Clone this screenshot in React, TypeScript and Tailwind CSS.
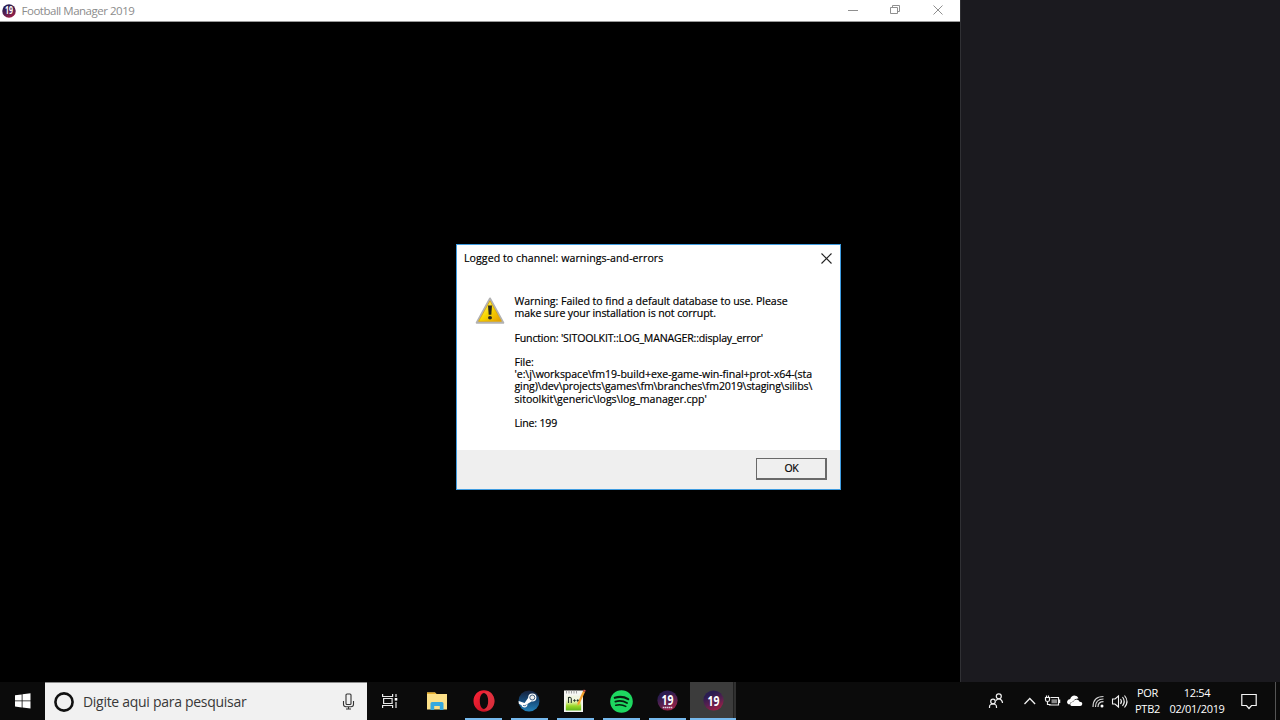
import type { ReactNode } from "react";

function Badge19({ id, size, caption }: { id: string; size: number; caption?: boolean }) {
  return (
    <svg width={size} height={size} viewBox="0 0 22 22">
      <defs>
        <linearGradient id={id} x1="0.25" y1="0" x2="0.7" y2="1">
          <stop offset="0.2" stopColor="#2b1c50" />
          <stop offset="0.6" stopColor="#5b2150" />
          <stop offset="1" stopColor="#a51e45" />
        </linearGradient>
      </defs>
      <circle cx="11" cy="11" r="10.6" fill={`url(#${id})`} />
      <text
        x="11"
        y={caption ? 16 : 16.4}
        textAnchor="middle"
        textLength="12.5"
        lengthAdjust="spacingAndGlyphs"
        fontFamily="'Open Sans', sans-serif"
        fontWeight="700"
        fontSize="15.5"
        fill="#fff"
      >
        19
      </text>
      {caption && <path d="M6 18.3h10" stroke="#d9cfe0" strokeWidth="1.5" strokeDasharray="1.6 .5" />}
    </svg>
  );
}

function TitleBar() {
  return (
    <header className="flex h-[22px] items-center border-b border-[#9a9a9a] bg-white pl-[2px]">
      <Badge19 id="title" size={14} />
      <span className="mt-[1px] ml-[5.5px] text-[11.5px] leading-none tracking-[-0.48px] text-[#8c8c8c]">Football Manager 2019</span>
      <svg className="ml-auto" width="130" height="21" viewBox="830 0 130 21" fill="none" stroke="#8f8f8f">
        <path d="M848 10.5h10" />
        <path d="M890.5 7.5h7v6h-7zM892.5 7.5v-2h7v6h-2" />
        <path d="M933.5 5.5l9 9M942.5 5.5l-9 9" />
      </svg>
    </header>
  );
}

function WarningIcon() {
  return (
    <svg className="mt-[1.5px]" width="30" height="28" viewBox="0 0 30 28">
      <defs>
        <linearGradient id="warn" x1="0" y1="0" x2="1" y2="1">
          <stop offset="0.2" stopColor="#fff06a" />
          <stop offset="0.5" stopColor="#f8d800" />
          <stop offset="1" stopColor="#e39a00" />
        </linearGradient>
      </defs>
      <path d="M15 1.5L28.3 25.8H1.7z" fill="#c4c4c4" stroke="#b2b2b2" strokeWidth="2" strokeLinejoin="round" />
      <path d="M15 3.8L26.4 24.3H3.6z" fill="url(#warn)" stroke="#dda500" strokeWidth=".8" strokeLinejoin="round" />
      <path d="M13 8.5h4l-.7 9.300h-2.600z" fill="#29281f" />
      <ellipse cx="15" cy="20.8" rx="2" ry="1.8" fill="#29281f" />
    </svg>
  );
}

function ErrorDialog() {
  return (
    <section className="absolute top-[244px] left-[456px] flex h-[246px] w-[385px] flex-col border border-[#3f9ce0] bg-white text-[10.6px] text-black [-webkit-text-stroke:0.18px]">
      <div className="flex h-[27px] items-center justify-between pr-[8px] pl-[7px]">
        <span className="mt-[1px] tracking-[0.06px]">Logged to channel: warnings-and-errors</span>
        <svg width="11" height="11" viewBox="0 0 11 11" stroke="#222" strokeWidth="1.1">
          <path d="M.5.5l10 10M10.5.5l-10 10" />
        </svg>
      </div>
      <div className="flex flex-1 pt-[23px] pl-[18px]">
        <WarningIcon />
        <div className="ml-[9.5px] leading-[12.2px] whitespace-nowrap">
          <p className="tracking-[-0.05px]">Warning: Failed to find a default database to use. Please</p>
          <p className="tracking-[-0.12px]">make sure your installation is not corrupt.</p>
          <p className="mt-[12.2px] tracking-[-0.19px]">Function: 'SITOOLKIT::LOG_MANAGER::display_error'</p>
          <p className="mt-[12.2px] tracking-[-0.05px]">File:</p>
          <p className="tracking-[-0.06px]">'e:\j\workspace\fm19-build+exe-game-win-final+prot-x64-(sta</p>
          <p className="tracking-[-0.13px]">ging)\dev\projects\games\fm\branches\fm2019\staging\silibs\</p>
          <p className="tracking-[-0.03px]">sitoolkit\generic\logs\log_manager.cpp'</p>
          <p className="mt-[12.2px] tracking-[-0.2px]">Line: 199</p>
        </div>
      </div>
      <footer className="flex h-[39px] items-start justify-end bg-[#efefef] pt-[8px] pr-[13px]">
        <button className="flex h-[22px] w-[71px] items-center justify-center border border-r-2 border-b-2 border-[#696969] bg-[#efefef] pt-px pl-px text-[10.5px] tracking-[-0.2px]">
          OK
        </button>
      </footer>
    </section>
  );
}

function TaskButton({ children, running, active }: { children: ReactNode; running?: boolean; active?: boolean }) {
  return (
    <div className={active ? "flex h-full w-[46px] flex-col bg-[#3c3c3c]" : "flex h-full w-[46px] flex-col"}>
      <div className="flex flex-1 items-center justify-center">{children}</div>
      <div className={active ? "h-[2px] bg-[#76b9ed]" : running ? "mx-[4.5px] h-[2px] bg-[#76b9ed]" : "h-[2px]"} />
    </div>
  );
}

function Taskbar() {
  return (
    <footer className="flex h-[38px] items-stretch bg-[#0b0b0b] text-white">
      <div className="flex w-[45px] items-center justify-center">
        <svg width="16" height="16" viewBox="0 0 16 16" fill="#fff">
          <path d="M0 2.3l6.7-.9v6.1H0zM7.5 1.3L15.5.2v7.3h-8zM0 8.3h6.7v6.1L0 13.5zM7.5 8.3h8v7.3l-8-1.1z" />
        </svg>
      </div>
      <div className="flex w-[322px] items-center border-t border-[#8a8a8a] bg-[#f1f1f1] pr-[12px] pl-[8px]">
        <svg width="22" height="22" viewBox="0 0 22 22">
          <circle cx="11" cy="11" r="8.6" fill="none" stroke="#111" strokeWidth="2.6" />
        </svg>
        <span className="ml-[8px] text-[14px] tracking-[-0.29px] text-[#383838]">Digite aqui para pesquisar</span>
        <svg className="ml-auto" width="13" height="17" viewBox="0 0 13 17" fill="none" stroke="#333" strokeWidth="1.1">
          <rect x="4" y="1" width="5" height="10.5" rx="1" />
          <path d="M1.5 8v3.2q0 2.5 2.5 2.5h5q2.500 0 2.500-2.500V8M6.500 13.700v2.300M4 16h5" />
        </svg>
      </div>
      <div className="flex w-[47px] items-center justify-center pr-[2px]">
        <svg width="16" height="16" viewBox="0 0 16 16" fill="none" stroke="#e8e8e8" strokeWidth="1.2">
          <path d="M.6 1v2.500h10V1M.6 15v-2.500h10V15M1.600 5.500h8.500v5H1.600zM14 1v3M14 9v6" />
          <path d="M12.700 5h2.600v2.600h-2.600z" fill="#fff" stroke="none" />
        </svg>
      </div>
      <TaskButton>
        <svg className="mt-[1px]" width="22" height="20" viewBox="0 0 22 20">
          <path d="M1 1.500h8l1.500 1.500H21v15.500H1z" fill="#fce088" />
          <path d="M1 1.500h8l1.500 1.500H1z" fill="#e9b02f" />
          <path d="M4.500 19v-6.500q0-1.500 1.500-1.500h10q1.500 0 1.500 1.500V19h-3.700v-4H8.200v4z" fill="#35a9df" />
        </svg>
      </TaskButton>
      <TaskButton running>
        <svg className="mt-[2px] ml-px" width="22" height="22" viewBox="0 0 22 22">
          <defs>
            <linearGradient id="opera" x1="0" y1="0" x2="1" y2="1">
              <stop offset="0" stopColor="#ff2638" />
              <stop offset="1" stopColor="#b80d20" />
            </linearGradient>
          </defs>
          <path d="M11 .3C5 .3.500 5 .500 11S5 21.700 11 21.700 21.500 17 21.500 11 17 .3 11 .3zM11 3c2.700 0 4.200 3.700 4.200 8S13.700 19 11 19s-4.200-3.700-4.200-8S8.300 3 11 3z" fill="url(#opera)" fillRule="evenodd" />
          <path d="M11 3c2-2.300 5-1.500 7.200.2C20.300 5.200 21.500 8 21.500 11s-1.200 5.800-3.300 7.800C16 20.500 13 21.300 11 19c2.700 0 4.200-3.700 4.200-8S13.700 3 11 3z" fill="#e8464e" opacity=".55" />
        </svg>
      </TaskButton>
      <TaskButton running>
        <svg className="mt-[2px]" width="22" height="22" viewBox="0 0 22 22">
          <defs>
            <linearGradient id="steam" x1="0" y1="0" x2="0" y2="1">
              <stop offset="0" stopColor="#15213c" />
              <stop offset=".5" stopColor="#164b7b" />
              <stop offset="1" stopColor="#2382ba" />
            </linearGradient>
          </defs>
          <circle cx="11" cy="11" r="10.500" fill="url(#steam)" />
          <path d="M.600 11l6 2 3.800-5.500 3.100 4-4.100 2.500c.3 2-1 3.600-2.900 3.600-1.500 0-2.600-1-3-2.300L.8 13.800z" fill="#fff" />
          <circle cx="14.300" cy="7.500" r="4.100" fill="#fff" />
          <circle cx="14.300" cy="7.500" r="2.500" fill="#eee" stroke="#284b70" strokeWidth=".9" />
          <path d="M5 15.400q3 1.500 3.300-1" fill="none" stroke="#285d8c" strokeWidth=".8" />
        </svg>
      </TaskButton>
      <TaskButton running>
        <svg className="mt-[2px]" width="22" height="24" viewBox="0 0 22 24">
          <defs>
            <linearGradient id="npp" x1="0" y1="0" x2="0" y2="1">
              <stop offset=".25" stopColor="#f1f5e0" />
              <stop offset=".5" stopColor="#d5eb8e" />
              <stop offset=".7" stopColor="#9bd827" />
              <stop offset="1" stopColor="#5fb51b" />
            </linearGradient>
          </defs>
          <path d="M0 1.500h19v21.500H0z" fill="#f6f6f3" />
          <path d="M1.800 6.500h15.400v15H1.800z" fill="url(#npp)" />
          <path d="M2.500 1.500v3M5 1.500v3M7.500 1.500v3M10 1.500v3M12.500 1.500v3" stroke="#969696" strokeWidth=".9" />
          <path d="M4.500 14V8.500q2.800-.5 2.800 1.500V14M9.300 11.500h2.400M10.500 10.200v2.600M12.600 11.500h2.400M13.800 10.200v2.600" fill="none" stroke="#28372b" strokeWidth="1.100" />
          <path d="M13.500 14L19 2l2 1-5.500 12-2 1.500z" fill="#f4a02b" />
          <path d="M19 2l.8-1.500 2 1-.8 1.500z" fill="#d95a51" />
        </svg>
      </TaskButton>
      <TaskButton running>
        <svg className="mt-[2px]" width="23" height="23" viewBox="0 0 24 24">
          <circle cx="12" cy="12" r="11.800" fill="#1ed760" />
          <g fill="none" stroke="#071b0e" strokeLinecap="round">
            <path d="M5 8.100c4.500-1.300 10-.9 14 1.400" strokeWidth="2.300" />
            <path d="M5.600 12.100c4.200-1.200 8.500-.7 12.200 1.500" strokeWidth="1.900" />
            <path d="M6 15.900c3.700-.9 7.200-.6 10.500 1.300" strokeWidth="1.500" />
          </g>
        </svg>
      </TaskButton>
      <TaskButton running>
        <Badge19 id="first" size={21} caption />
      </TaskButton>
      <div className="relative">
        <TaskButton active>
          <Badge19 id="second" size={21} />
        </TaskButton>
        <div className="absolute top-0 right-0 h-[36px] w-[3px] border-l border-[#202020] bg-[#303030]" />
      </div>
      <div className="ml-auto flex items-stretch">
        <svg width="150" height="38" viewBox="982 682 150 38" fill="none" stroke="#f2f2f2" strokeWidth="1.200">
          <circle cx="993" cy="701.500" r="2.300" />
          <path d="M989.500 708v-1q0-3 3.500-3t3.500 3v1" />
          <circle cx="998.800" cy="696.300" r="2.500" />
          <path d="M996 700.500q2.800-2.800 5.200-.5 1.300 1.200 1.300 3" />
          <path d="M1024.500 704l5.300-5.500 5.300 5.500" strokeWidth="1.300" />
          <path d="M1050.500 697.500h8v7.500h-9.500" />
          <path d="M1059.500 699.500v3.500" strokeWidth="1.500" />
          <path d="M1051.500 699.300h5.500v4h-5.500z" fill="#8a8a8a" stroke="none" />
          <path d="M1045.500 697.500h4v2.500q0 1.500-2 1.500t-2-1.500zM1046.500 695.500v2M1048.500 695.500v2M1047.500 701.500v3h3" />
          <path d="M1069.500 704.500q-2.700-.5-2.400-3 .5-2.500 3.100-2.500 1-3.500 4.300-3.500 3 0 4 2.700l-3.500 1-2 2.200q-3 .6-3.500 3.100z" fill="#fff" stroke="none" />
          <path d="M1071.500 706q-1.500-.5-1.300-2.300.5-1.900 2.800-1.700 1-2.700 3.600-2.600 2.400.2 3 2.400 2.700 0 2.700 2.200-.2 2-2.200 2z" fill="#fff" stroke="none" />
          <g stroke="#d5d5d5" strokeWidth="1.200">
            <path d="M1093 707q0-10.500 10.500-10.500M1095.500 707q0-8 8-8M1098 707q0-5.300 5.500-5.300" />
          </g>
          <circle cx="1102" cy="706" r="1.500" fill="#fff" stroke="none" />
          <path d="M1112.500 699h2.500l3.500-3v11l-3.500-3h-2.500zM1120.500 699q2 2.500 0 5M1122.500 697q3.500 4.500 0 9M1124.500 695.500q5 6 0 12" strokeWidth="1.100" />
        </svg>
        <div className="flex w-[32px] flex-col items-center pt-[3px] pr-px text-[11px] leading-[16px] tracking-[-0.25px]">
          <span>POR</span>
          <span>PTB2</span>
        </div>
        <div className="flex w-[67px] flex-col items-center pt-[3px] pr-px text-[11px] leading-[16px] tracking-[-0.32px]">
          <span>12:54</span>
          <span>02/01/2019</span>
        </div>
        <div className="flex w-[45px] items-center justify-start border-r border-[#555] pl-[10px]">
          <svg width="16" height="17" viewBox="0 0 16 17" fill="none" stroke="#f5f5f5" strokeWidth="1.200">
            <path d="M.8 1.500h14.400v11H10.500L8 15.500 5.500 12.500H.8z" />
          </svg>
        </div>
        <div className="w-[4px]" />
      </div>
    </footer>
  );
}

export default function App() {
  return (
    <main className="relative flex h-[720px] w-[1280px] flex-col overflow-hidden bg-black font-['Open_Sans','Noto_Sans',sans-serif]">
      <div className="flex h-[682px]">
        <div className="w-[961px] border-r border-[#303034] bg-black">
          <TitleBar />
        </div>
        <aside className="flex-1 bg-[#1b1a1f]" />
      </div>
      <Taskbar />
      <ErrorDialog />
    </main>
  );
}
